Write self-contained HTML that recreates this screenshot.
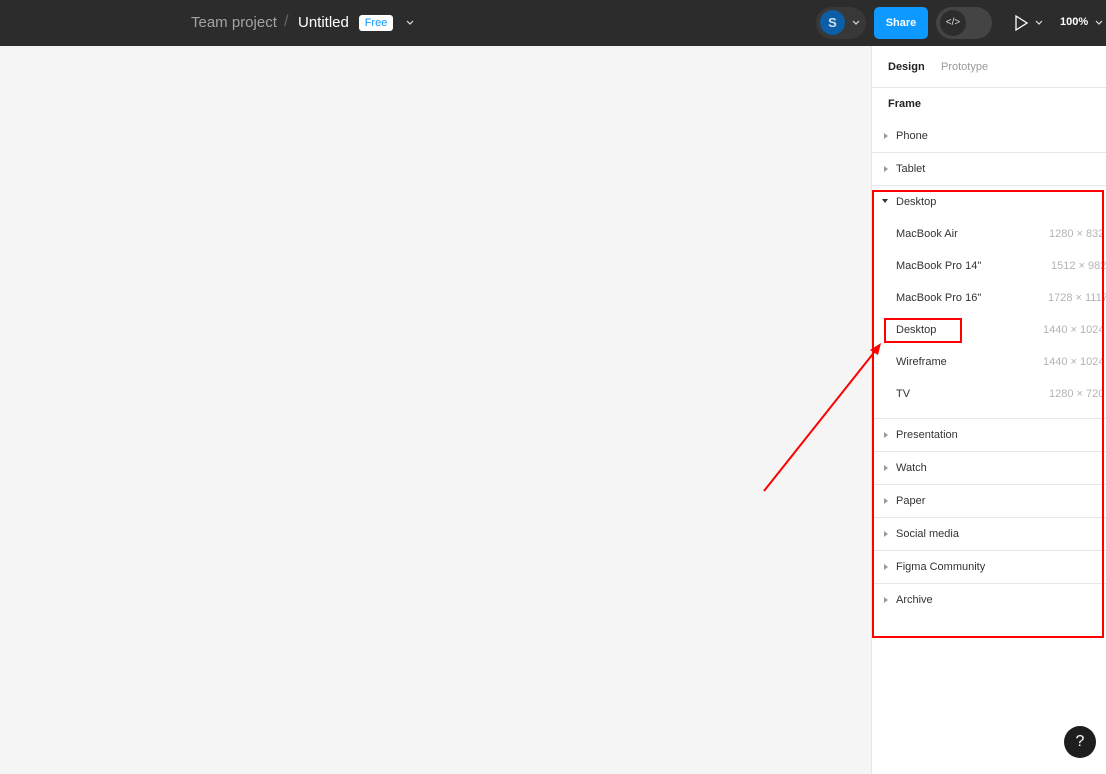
<!DOCTYPE html><html><head><style>
body{margin:0;width:1106px;height:774px;overflow:hidden;background:#f5f5f5;font-family:"Liberation Sans",sans-serif;position:relative}
.a{position:absolute;white-space:nowrap}
.top{position:absolute;left:0;top:0;width:1106px;height:46px;background:#2c2c2c}
.panel{position:absolute;left:871px;top:46px;width:235px;height:728px;background:#fff;border-left:1px solid #e6e6e6;overflow:hidden}
.t{font-size:11px;color:#333;position:absolute;white-space:nowrap}
.s{font-size:11px;color:#b3b3b3;position:absolute;white-space:nowrap}
.sep{position:absolute;left:0;width:235px;height:1px;background:#e6e6e6}
.tri{position:absolute;left:12px;width:0;height:0;border-top:3px solid transparent;border-bottom:3px solid transparent;border-left:4px solid #999}
.ch{position:absolute}
</style></head><body>
<div class="top">
<div class="a" style="left:191px;top:14px;font-size:15px;color:#a3a3a3">Team project</div>
<div class="a" style="left:284px;top:13px;font-size:16px;color:#666">/</div>
<div class="a" style="left:298px;top:14px;font-size:15px;color:#fff">Untitled</div>
<div class="a" style="left:359px;top:15px;width:34px;height:16px;background:#fff;border-radius:3px;color:#0d99ff;font-size:11px;text-align:center;line-height:16px">Free</div>
<svg class="ch" style="left:406px;top:20px" width="8" height="5"><path d="M1 1 L4 4 L7 1" fill="none" stroke="#ddd" stroke-width="1.2"/></svg>
<div class="a" style="left:816px;top:7px;width:50px;height:32px;background:#383838;border-radius:16px"></div>
<div class="a" style="left:820px;top:10px;width:25px;height:25px;background:#0c5ea6;border-radius:50%;color:#cfe0f0;font-size:13px;font-weight:bold;text-align:center;line-height:25px">S</div>
<svg class="ch" style="left:852px;top:20px" width="8" height="5"><path d="M1 1 L4 4 L7 1" fill="none" stroke="#ddd" stroke-width="1.2"/></svg>
<div class="a" style="left:874px;top:7px;width:54px;height:32px;background:#0d99ff;border-radius:5px;color:#fff;font-size:11px;font-weight:bold;text-align:center;line-height:32px">Share</div>
<div class="a" style="left:936px;top:7px;width:56px;height:32px;background:#444;border-radius:16px"></div>
<div class="a" style="left:940px;top:10px;width:26px;height:26px;background:#2c2c2c;border-radius:50%;color:#ddd;font-size:10px;text-align:center;line-height:26px">&lt;/&gt;</div>
<svg class="a" style="left:1015px;top:15px" width="14" height="16"><path d="M1 1 L12 8 L1 15 Z" fill="none" stroke="#fff" stroke-width="1.3"/></svg>
<svg class="ch" style="left:1035px;top:20px" width="8" height="5"><path d="M1 1 L4 4 L7 1" fill="none" stroke="#ddd" stroke-width="1.2"/></svg>
<div class="a" style="left:1060px;top:16px;font-size:11px;font-weight:bold;color:#fff">100%</div>
<svg class="ch" style="left:1095px;top:20px" width="8" height="5"><path d="M1 1 L4 4 L7 1" fill="none" stroke="#ddd" stroke-width="1.2"/></svg>
</div>
<div class="panel">
<div class="t" style="left:16px;top:15px;font-weight:bold;color:#222">Design</div>
<div class="t" style="left:69px;top:15px;color:#999">Prototype</div>
<div class="sep" style="top:41px"></div>
<div class="t" style="left:16px;top:52px;font-weight:bold;color:#222">Frame</div>
<div class="tri" style="top:87px"></div><div class="t" style="left:24px;top:84px">Phone</div>
<div class="sep" style="top:106px"></div>
<div class="tri" style="top:120px"></div><div class="t" style="left:24px;top:117px">Tablet</div>
<div class="sep" style="top:139px"></div>
<div class="a" style="left:10px;top:153px;border-left:3px solid transparent;border-right:3px solid transparent;border-top:4px solid #333"></div>
<div class="t" style="left:24px;top:150px">Desktop</div>
<div class="t" style="left:24px;top:182px">MacBook Air</div><div class="s" style="left:177px;top:182px">1280 × 832</div>
<div class="t" style="left:24px;top:214px">MacBook Pro 14"</div><div class="s" style="left:179px;top:214px">1512 × 982</div>
<div class="t" style="left:24px;top:246px">MacBook Pro 16"</div><div class="s" style="left:176px;top:246px">1728 × 1117</div>
<div class="t" style="left:24px;top:278px">Desktop</div><div class="s" style="left:171px;top:278px">1440 × 1024</div>
<div class="t" style="left:24px;top:310px">Wireframe</div><div class="s" style="left:171px;top:310px">1440 × 1024</div>
<div class="t" style="left:24px;top:342px">TV</div><div class="s" style="left:177px;top:342px">1280 × 720</div>
<div class="sep" style="top:372px"></div>
<div class="tri" style="top:386px"></div><div class="t" style="left:24px;top:383px">Presentation</div>
<div class="sep" style="top:405px"></div>
<div class="tri" style="top:419px"></div><div class="t" style="left:24px;top:416px">Watch</div>
<div class="sep" style="top:438px"></div>
<div class="tri" style="top:452px"></div><div class="t" style="left:24px;top:449px">Paper</div>
<div class="sep" style="top:471px"></div>
<div class="tri" style="top:485px"></div><div class="t" style="left:24px;top:482px">Social media</div>
<div class="sep" style="top:504px"></div>
<div class="tri" style="top:518px"></div><div class="t" style="left:24px;top:515px">Figma Community</div>
<div class="sep" style="top:537px"></div>
<div class="tri" style="top:551px"></div><div class="t" style="left:24px;top:548px">Archive</div>
</div>
<div class="a" style="left:872px;top:190px;width:228px;height:444px;border:2px solid #f00"></div>
<div class="a" style="left:884px;top:318px;width:74px;height:21px;border:2px solid #f00"></div>
<svg class="a" style="left:0;top:0" width="1106" height="774"><line x1="764" y1="491" x2="876" y2="350" stroke="#f00" stroke-width="2"/><path d="M881 343 L870 350 L878 355 Z" fill="#f00"/></svg>
<div class="a" style="left:1064px;top:726px;width:32px;height:32px;border-radius:50%;background:#1e1e1e;color:#fff;font-size:16px;text-align:center;line-height:32px">?</div>
</body></html>
